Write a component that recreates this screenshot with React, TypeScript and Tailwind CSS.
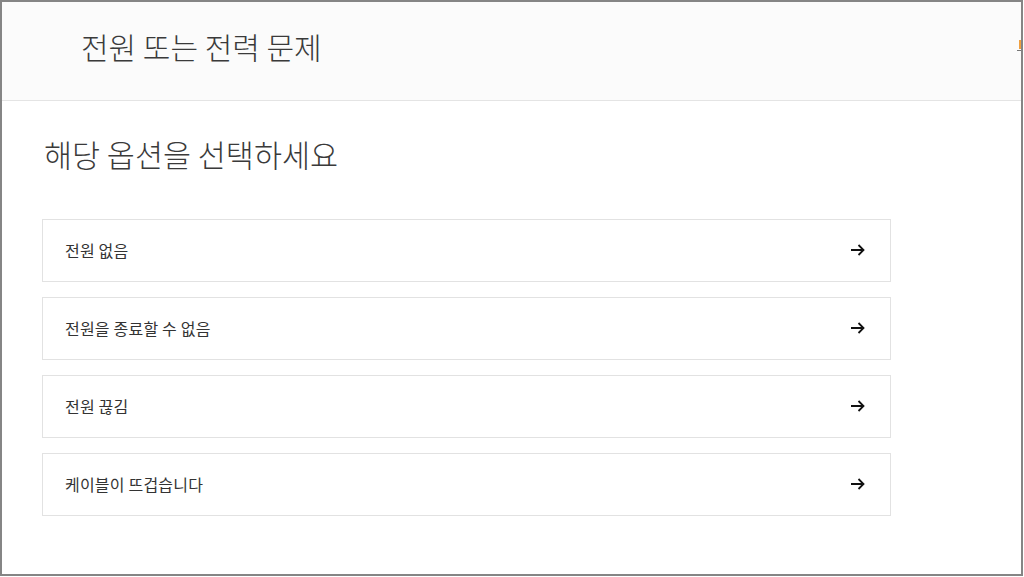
import React from 'react';

const options = ['전원 없음', '전원을 종료할 수 없음', '전원 끊김', '케이블이 뜨겁습니다'];

function Arrow() {
  return (
    <svg width="15" height="12" viewBox="0 0 15 12" fill="none" stroke="#111" strokeWidth="1.8">
      <path d="M1 6h12.5M8.5 1l5 5-5 5" />
    </svg>
  );
}

export default function App() {
  return (
    <div className="w-[1024px] h-[577px] bg-white" style={{ fontFamily: '"Noto Sans CJK KR", "Noto Sans", sans-serif' }}>
      <div className="w-[1023px] h-[576px] border-2 border-[#858585] flex flex-col overflow-hidden">
        {/* header */}
        <div className="relative h-[99px] shrink-0 bg-[#fbfbfb] border-b border-[#e4e4e4] flex items-center pl-[79px]">
          <h1 className="text-[30px] font-light text-[#3a3a3a] leading-none -mt-[11px]">전원 또는 전력 문제</h1>
          <div className="absolute right-0 top-[38px] w-[2px] h-[9px] bg-[#f0a040]" />
          <div className="absolute right-0 top-[48px] w-[4px] h-[1px] bg-[#777]" />
        </div>

        {/* body */}
        <div className="pl-[40px] pt-[38px]">
          <h2 className="pl-[2px] text-[30.5px] font-light text-[#3a3a3a] leading-none">해당 옵션을 선택하세요</h2>
          <div className="mt-[49px] w-[849px] flex flex-col gap-[15px]">
            {options.map(label => (
              <div
                key={label}
                className="h-[63px] border border-[#e2e2e2] flex items-center justify-between pl-[22px] pr-[25px]"
              >
                <span className="text-[16px] tracking-[0.2px] text-[#333] -mt-[1px]">{label}</span>
                <Arrow />
              </div>
            ))}
          </div>
        </div>
      </div>
    </div>
  );
}
